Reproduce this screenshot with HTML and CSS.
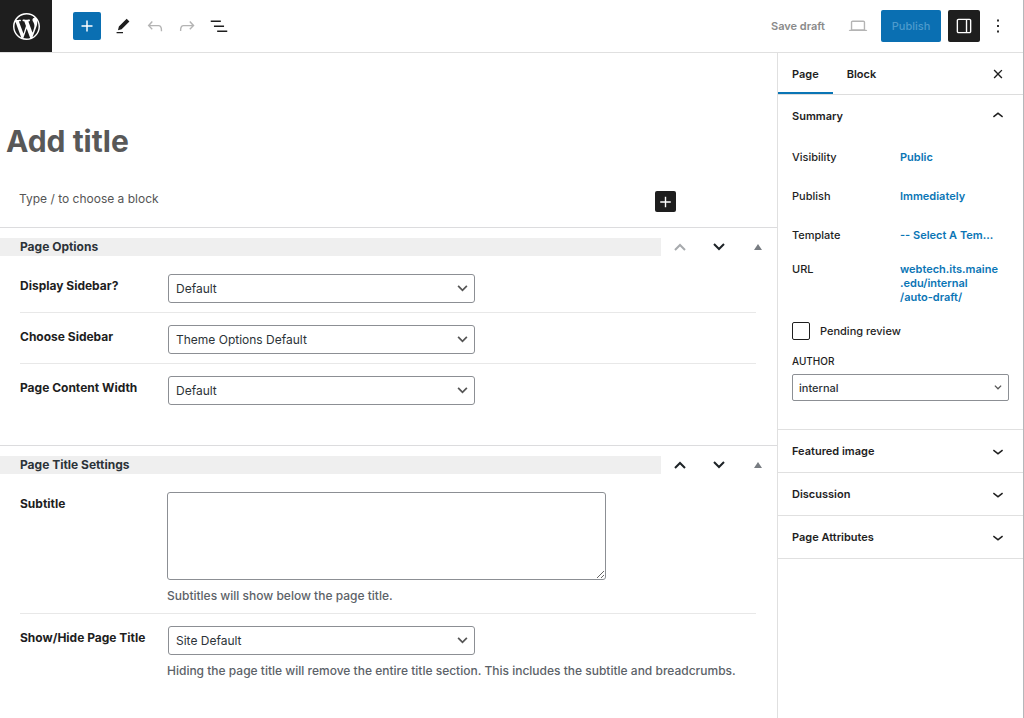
FILE: index.html
```html
<!DOCTYPE html>
<html lang="en">
<head>
    <meta charset="UTF-8">
    <title>Add New Page</title>
    <link rel="stylesheet" href="styles.css">
</head>
<body>
    <!-- Top toolbar -->
    <header class="toolbar">
        <a class="logo" href="#" aria-label="View Pages">
            <svg viewBox="0 0 20 20"><path d="M20 10c0-5.51-4.49-10-10-10C4.48 0 0 4.49 0 10c0 5.52 4.48 10 10 10 5.51 0 10-4.48 10-10zM7.78 15.37L4.37 6.22c.55-.02 1.17-.08 1.17-.08.5-.06.44-1.13-.06-1.11 0 0-1.45.11-2.37.11-.18 0-.37 0-.58-.01C4.12 2.69 6.87 1.11 10 1.11c2.33 0 4.45.87 6.05 2.34-.68-.11-1.65.39-1.65 1.58 0 .74.45 1.36.9 2.1.35.61.55 1.36.55 2.46 0 1.49-1.4 5-1.4 5l-3.03-8.37c.54-.02.82-.17.82-.17.5-.05.44-1.25-.06-1.22 0 0-1.44.12-2.38.12-.87 0-2.33-.12-2.33-.12-.5-.03-.56 1.2-.06 1.22l.92.08 1.26 3.41zM17.41 10c.24-.64.74-1.87.43-4.25.7 1.29 1.05 2.71 1.05 4.25 0 3.29-1.73 6.24-4.4 7.78.97-2.59 1.94-5.2 2.92-7.78zM6.1 18.09C3.12 16.65 1.11 13.53 1.11 10c0-1.3.23-2.48.72-3.59C3.25 10.3 4.67 14.2 6.1 18.09zm4.03-6.63l2.58 6.98c-.86.29-1.76.45-2.71.45-.79 0-1.57-.11-2.29-.33.81-2.38 1.62-4.74 2.42-7.1z"/></svg>
        </a>
        <div class="tools">
            <button class="add-block" aria-label="Toggle block inserter">
                <svg viewBox="0 0 24 24"><path d="M18 11.2h-5.2V6h-1.6v5.2H6v1.6h5.2V18h1.6v-5.2H18z"/></svg>
            </button>
            <button class="icon-button" aria-label="Tools">
                <svg viewBox="0 0 24 24"><path d="m19 7-3-3-8.5 8.5-1 4 4-1L19 7Zm-7 11.5H5V20h7v-1.5Z"/></svg>
            </button>
            <button class="icon-button" aria-label="Undo" disabled>
                <svg viewBox="0 0 24 24"><path d="M18.3 11.7c-.6-.6-1.4-.9-2.3-.9H6.7l2.9-3.3-1.1-1-4.5 5L8.5 16l1-1-2.7-2.7H16c.5 0 .9.2 1.3.5 1 1 1 3.4 1 4.5v.3h1.5v-.2c0-1.5 0-4.3-1.5-5.7z"/></svg>
            </button>
            <button class="icon-button" aria-label="Redo" disabled>
                <svg viewBox="0 0 24 24"><path d="M15.6 6.5l-1.1 1 2.9 3.3H8c-.9 0-1.7.3-2.3.9-1.4 1.5-1.4 4.2-1.4 5.6v.2h1.5v-.3c0-1.1 0-3.5 1-4.5.3-.3.7-.5 1.3-.5h9.2L14.5 15l1.1 1.1 4.6-4.6-4.6-5z"/></svg>
            </button>
            <button class="icon-button" aria-label="List view">
                <svg viewBox="0 0 24 24"><path d="M3 6h11v1.5H3V6Zm3.5 5.5h11V13h-11v-1.5ZM21 17H10v1.5h11V17Z"/></svg>
            </button>
        </div>
        <div class="actions">
            <button class="save-draft">Save draft</button>
            <button class="icon-button preview" aria-label="Preview" disabled>
                <svg viewBox="0 0 24 24"><path d="M20.5 16h-.7V8c0-1.1-.9-2-2-2H6.2c-1.1 0-2 .9-2 2v8h-.7c-.8 0-1.5.7-1.5 1.5h20c0-.8-.7-1.5-1.5-1.5zM5.7 8c0-.3.2-.5.5-.5h11.6c.3 0 .5.2.5.5v7.6H5.7V8z"/></svg>
            </button>
            <button class="publish">Publish</button>
            <button class="icon-button settings" aria-label="Settings">
                <svg viewBox="0 0 24 24"><path d="M18 4H6c-1.1 0-2 .9-2 2v12c0 1.1.9 2 2 2h12c1.1 0 2-.9 2-2V6c0-1.1-.9-2-2-2zm-4 14.5H6c-.3 0-.5-.2-.5-.5V6c0-.3.2-.5.5-.5h8v13zm4.5-.5c0 .3-.2.5-.5.5h-2.5v-13H18c.3 0 .5.2.5.5v12z"/></svg>
            </button>
            <button class="icon-button" aria-label="Options">
                <svg viewBox="0 0 24 24"><path d="M13 19h-2v-2h2v2zm0-6h-2v-2h2v2zm0-6h-2V5h2v2z"/></svg>
            </button>
        </div>
    </header>

    <div class="editor">
        <main class="content">
            <div class="canvas">
                <h1 class="title" contenteditable="true">Add title</h1>
                <div class="block-row">
                    <p class="prompt" contenteditable="true">Type / to choose a block</p>
                    <button class="inserter" aria-label="Add block">
                        <svg viewBox="0 0 24 24"><path d="M18 11.2h-5.2V6h-1.6v5.2H6v1.6h5.2V18h1.6v-5.2H18z"/></svg>
                    </button>
                </div>
            </div>

            <!-- Page Options -->
            <section class="metabox">
                <div class="metabox-header">
                    <h2>Page Options</h2>
                    <div class="handles">
                        <button aria-label="Move up" disabled><svg viewBox="0 0 14 10"><path d="M2 8l5-5 5 5"/></svg></button>
                        <button aria-label="Move down"><svg viewBox="0 0 14 10"><path d="M2 2l5 5 5-5"/></svg></button>
                        <button class="toggle" aria-label="Toggle panel"><svg viewBox="0 0 8 6"><path d="M0 6l4-6 4 6z"/></svg></button>
                    </div>
                </div>
                <div class="field">
                    <label for="display-sidebar">Display Sidebar?</label>
                    <div class="control">
                        <select id="display-sidebar"><option>Default</option></select>
                    </div>
                </div>
                <div class="field">
                    <label for="choose-sidebar">Choose Sidebar</label>
                    <div class="control">
                        <select id="choose-sidebar"><option>Theme Options Default</option></select>
                    </div>
                </div>
                <div class="field">
                    <label for="content-width">Page Content Width</label>
                    <div class="control">
                        <select id="content-width"><option>Default</option></select>
                    </div>
                </div>
            </section>

            <!-- Page Title Settings -->
            <section class="metabox">
                <div class="metabox-header">
                    <h2>Page Title Settings</h2>
                    <div class="handles">
                        <button aria-label="Move up"><svg viewBox="0 0 14 10"><path d="M2 8l5-5 5 5"/></svg></button>
                        <button aria-label="Move down"><svg viewBox="0 0 14 10"><path d="M2 2l5 5 5-5"/></svg></button>
                        <button class="toggle" aria-label="Toggle panel"><svg viewBox="0 0 8 6"><path d="M0 6l4-6 4 6z"/></svg></button>
                    </div>
                </div>
                <div class="field">
                    <label for="subtitle">Subtitle</label>
                    <div class="control">
                        <textarea id="subtitle"></textarea>
                        <p>Subtitles will show below the page title.</p>
                    </div>
                </div>
                <div class="field">
                    <label for="show-title">Show/Hide Page Title</label>
                    <div class="control">
                        <select id="show-title"><option>Site Default</option></select>
                        <p>Hiding the page title will remove the entire title section. This includes the subtitle and breadcrumbs.</p>
                    </div>
                </div>
            </section>
        </main>

        <!-- Settings sidebar -->
        <aside class="sidebar">
            <div class="tabs">
                <button class="tab active">Page</button>
                <button class="tab">Block</button>
                <button class="close" aria-label="Close settings">
                    <svg viewBox="0 0 24 24"><path d="M12 13.06l3.712 3.713 1.061-1.06L13.061 12l3.712-3.712-1.06-1.06L12 10.938 8.288 7.227l-1.061 1.06L10.939 12l-3.712 3.712 1.06 1.061L12 13.061z"/></svg>
                </button>
            </div>
            <div class="panel">
                <button class="panel-title">Summary
                    <svg viewBox="0 0 24 24"><path d="M6.5 12.4L12 8l5.5 4.4-.9 1.2L12 10l-4.5 3.6-1-1.2z"/></svg>
                </button>
                <div class="summary">
                    <div class="row"><span>Visibility</span><a href="#">Public</a></div>
                    <div class="row"><span>Publish</span><a href="#">Immediately</a></div>
                    <div class="row"><span>Template</span><a href="#">-- Select A Tem...</a></div>
                    <div class="row url"><span>URL</span><a href="#">webtech.its.maine<br>.edu/internal<br>/auto-draft/</a></div>
                    <div class="pending">
                        <input type="checkbox" id="pending">
                        <label for="pending">Pending review</label>
                    </div>
                    <label class="author-label" for="author">AUTHOR</label>
                    <select class="author" id="author"><option>internal</option></select>
                </div>
            </div>
            <div class="panel">
                <button class="panel-title">Featured image
                    <svg viewBox="0 0 24 24"><path d="M17.5 11.6L12 16l-5.5-4.4.9-1.2L12 14l4.5-3.6 1 1.2z"/></svg>
                </button>
            </div>
            <div class="panel">
                <button class="panel-title">Discussion
                    <svg viewBox="0 0 24 24"><path d="M17.5 11.6L12 16l-5.5-4.4.9-1.2L12 14l4.5-3.6 1 1.2z"/></svg>
                </button>
            </div>
            <div class="panel">
                <button class="panel-title">Page Attributes
                    <svg viewBox="0 0 24 24"><path d="M17.5 11.6L12 16l-5.5-4.4.9-1.2L12 14l4.5-3.6 1 1.2z"/></svg>
                </button>
            </div>
        </aside>
    </div>
</body>
</html>
```
FILE: styles.css
```css
* {
    box-sizing: border-box;
}
body {
    display: flex;
    flex-direction: column;
    min-height: 100vh;
    margin: 0;
    border-right: 1px solid #b5b7ba;
    font-family: Inter, "Liberation Sans", sans-serif;
    font-size: 12px;
    line-height: 16px;
    color: #1e1e1e;
    background: #fff;
}
h1, h2, p {
    margin: 0;
}
button {
    display: flex;
    align-items: center;
    justify-content: center;
    padding: 0;
    border: none;
    background: none;
    font: inherit;
    color: inherit;
    cursor: pointer;
}
svg {
    display: block;
    width: 22px;
    height: 22px;
    fill: currentColor;
}
a {
    color: #0a75b5;
    text-decoration: none;
}

/* Toolbar */
.toolbar {
    display: flex;
    align-items: center;
    border-bottom: 1px solid #e0e0e0;
}
.logo {
    display: flex;
    align-items: center;
    justify-content: center;
    width: 52px;
    height: 52px;
    color: #fff;
    background: #1e1e1e;
}
.logo svg {
    width: 27px;
    height: 27px;
}
.tools {
    display: flex;
    align-items: center;
    margin-left: 21px;
}
.add-block {
    width: 28px;
    height: 28px;
    margin-right: 6px;
    border-radius: 2px;
    color: #fff;
    background: #0a6fb2;
}
.icon-button {
    width: 32px;
    height: 32px;
    border-radius: 2px;
}
.icon-button:disabled {
    color: #b4b4b4;
}
.actions {
    display: flex;
    align-items: center;
    margin-left: auto;
    padding-right: 9px;
    font-size: 11px;
}
.save-draft {
    margin-right: 17px;
    color: #8a8a8a;
    font-weight: 600;
}
.preview {
    margin-right: 7px;
}
.publish {
    height: 32px;
    width: 60px;
    margin-right: 7px;
    border-radius: 2px;
    color: #4d9bcd;
    background: #0a6fb2;
    font-weight: 500;
}
.settings {
    margin-right: 2px;
    color: #fff;
    background: #1e1e1e;
}

/* Editor */
.editor {
    display: flex;
    flex: 1;
}
.content {
    flex: 1;
    min-width: 0;
}
.canvas {
    padding: 68px 101px 15px 6px;
}
.title {
    font-size: 30px;
    line-height: 40px;
    font-weight: 700;
    color: #585858;
}
.block-row {
    display: flex;
    justify-content: space-between;
    align-items: flex-start;
    margin-top: 30px;
    padding-left: 13px;
}
.prompt {
    color: #555;
}
.inserter {
    width: 21px;
    height: 21px;
    border-radius: 2px;
    color: #fff;
    background: #1e1e1e;
}

/* Meta boxes */
.metabox {
    padding: 10px 0 31px;
    border-top: 1px solid #dcdcde;
}
.metabox-header {
    display: flex;
    align-items: center;
    margin-bottom: 6px;
}
.metabox-header h2 {
    flex: 1;
    padding-left: 20px;
    font-size: 12px;
    line-height: 18px;
    font-weight: 700;
    color: #2c3338;
    background: #efefef;
}
.handles {
    display: flex;
    width: 116px;
}
.handles button {
    width: 39px;
    height: 18px;
    color: #1d2327;
}
.handles button:disabled {
    color: #a7aaad;
}
.handles svg {
    width: 14px;
    height: 10px;
    fill: none;
    stroke: currentColor;
    stroke-width: 2;
}
.handles .toggle svg {
    width: 8px;
    height: 6px;
    fill: #787c82;
    stroke: none;
}
.field {
    display: flex;
    margin: 0 21px 0 20px;
    padding: 12px 0 9px;
}
.field + .field {
    border-top: 1px solid #e8e8e8;
}
.field label {
    width: 147px;
    padding-top: 4px;
    font-weight: 700;
}
.control {
    flex: 1;
}
.control p {
    margin-top: 8px;
    font-weight: 500;
    color: #5c6268;
}
select {
    appearance: none;
    display: block;
    border: 1px solid #8c8f94;
    border-radius: 3px;
    font: inherit;
    color: #2c3338;
    background: #fff url("data:image/svg+xml,%3Csvg xmlns='http://www.w3.org/2000/svg' viewBox='0 0 12 8' fill='none' stroke='%23555' stroke-width='2'%3E%3Cpath d='M1 1l5 5 5-5'/%3E%3C/svg%3E") no-repeat right 6px center / 11px 7px;
}
.control select {
    width: 307px;
    height: 29px;
    margin-left: 1px;
    padding: 0 24px 0 7px;
}
textarea {
    display: block;
    width: 439px;
    height: 88px;
    border: 1px solid #8c8f94;
    border-radius: 3px;
    font: inherit;
}

/* Sidebar */
.sidebar {
    width: 246px;
    border-left: 1px solid #e0e0e0;
    font-size: 11px;
}
.tabs {
    display: flex;
    border-bottom: 1px solid #ddd;
}
.tab {
    height: 41px;
    padding: 0 14px;
    font-weight: 600;
}
.tab.active {
    box-shadow: inset 0 -2px #0a75b5;
}
.close {
    width: 32px;
    margin: 0 9px 0 auto;
}
.panel {
    border-bottom: 1px solid #e0e0e0;
}
.panel-title {
    justify-content: space-between;
    width: 100%;
    height: 42px;
    padding: 0 14px;
    font-weight: 600;
}
.summary {
    padding: 0 14px 28px;
}
.row {
    display: flex;
    align-items: center;
    height: 39px;
}
.row span {
    flex: none;
    width: 108px;
}
.row span,
.pending label {
    font-weight: 500;
}
.row a {
    font-weight: 600;
}
.row.url {
    align-items: flex-start;
    height: auto;
    padding-top: 8px;
    line-height: 14px;
}
.pending {
    display: flex;
    align-items: center;
    gap: 10px;
    margin-top: 18px;
}
.pending input {
    appearance: none;
    width: 18px;
    height: 18px;
    margin: 0;
    border: 1px solid #1e1e1e;
    border-radius: 2px;
}
.author-label {
    display: block;
    margin: 13px 0 5px;
    font-size: 10px;
    font-weight: 500;
}
.author {
    width: 100%;
    height: 27px;
    padding: 0 6px;
    border-radius: 2px;
    font-weight: 500;
    background-size: 8px 5px;
}
```
